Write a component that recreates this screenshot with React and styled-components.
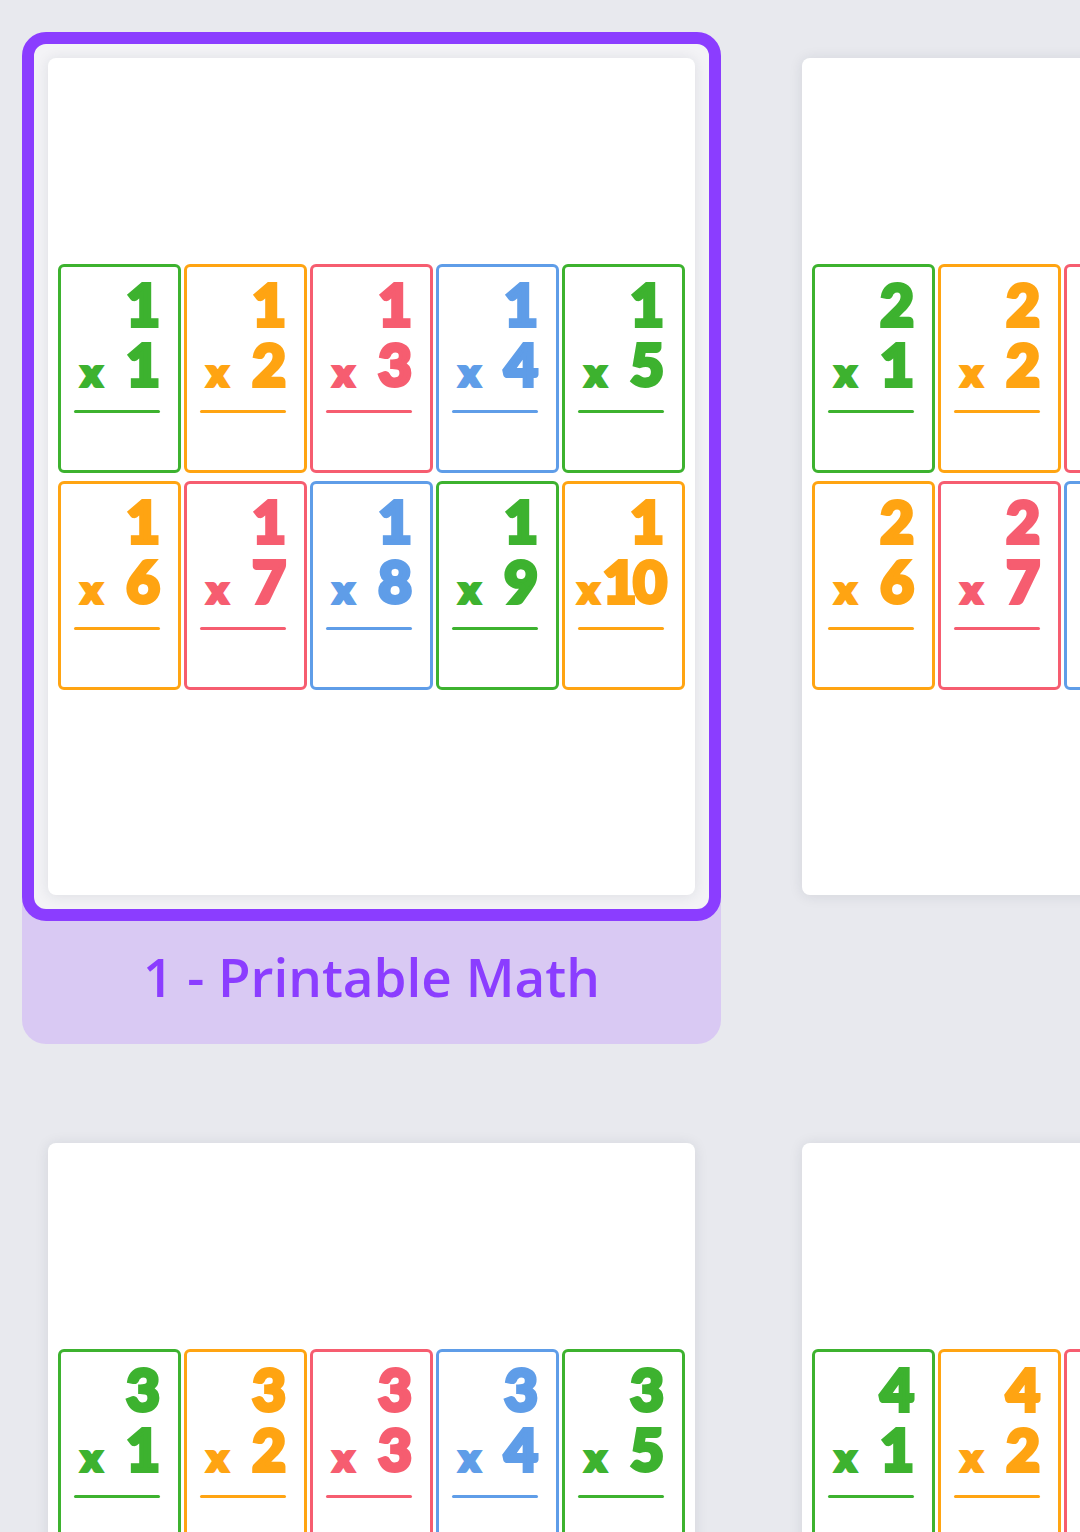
import React from "react";
import styled, { createGlobalStyle } from "styled-components";

const GlobalStyle = createGlobalStyle`
  * {
    box-sizing: border-box;
  }
  html,
  body {
    margin: 0;
    background: #e8e9ee;
    overflow: hidden;
  }
  body {
    font-family: "Open Sans", "Noto Sans", sans-serif;
  }
`;

const COLORS = ["#3db22f", "#ffa412", "#f65d70", "#5f9de8"];

const Board = styled.div`
  display: grid;
  grid-template-columns: repeat(2, 699px);
  column-gap: 55px;
  row-gap: 73px;
  padding: 32px 0 0 22px;
  width: max-content;
`;

const Item = styled.div`
  display: flex;
  flex-direction: column;
  border-radius: 24px;
  background: ${(p) => (p.$selected ? "#d9c9f3" : "transparent")};
`;

const Frame = styled.div`
  border: 12px solid ${(p) => (p.$selected ? "#8b3dff" : "transparent")};
  border-radius: 24px;
  padding: 14px;
  background: ${(p) => (p.$selected ? "#f3f3f6" : "transparent")};
`;

const Page = styled.div`
  width: 647px;
  height: 837px;
  padding: 0 10px;
  display: flex;
  align-items: center;
  background: #fff;
  border-radius: 8px;
  box-shadow: 0 1px 14px rgba(30, 35, 60, 0.1);
`;

const CardGrid = styled.div`
  width: 100%;
  display: grid;
  grid-template-columns: repeat(5, 1fr);
  gap: 8px 3px;
`;

const Card = styled.div`
  height: 209px;
  padding: 7px 0 0 13px;
  border: 3px solid ${(p) => p.$color};
  border-radius: 6px;
  color: ${(p) => p.$color};
  font-family: Lato, "Liberation Sans", sans-serif;
  font-weight: 900;
  -webkit-text-stroke: 4px ${(p) => p.$color};
`;

const Problem = styled.div`
  width: 86px;
  display: flex;
  flex-direction: column;
`;

const Top = styled.div`
  font-size: 58px;
  line-height: 60px;
  text-align: right;
`;

const Bottom = styled.div`
  display: flex;
  align-items: baseline;
  justify-content: space-between;
`;

const Times = styled.span`
  font-size: 36px;
  line-height: 44px;
  margin-left: ${(p) => (p.$wide ? "1px" : "8px")};
`;

const Num = styled.span`
  font-size: 58px;
  line-height: 60px;
  letter-spacing: ${(p) => (p.$wide ? "-3px" : "0")};
`;

const Rule = styled.div`
  height: 3px;
  margin-top: 16px;
  border-radius: 2px;
  background: currentColor;
`;

const Label = styled.div`
  height: 123px;
  padding-bottom: 12px;
  display: flex;
  align-items: center;
  justify-content: center;
  color: #8b3dff;
  font-size: 53px;
  font-weight: 600;
`;

const pages = [
  { id: 1, title: "Printable Math" },
  { id: 2 },
  { id: 3 },
  { id: 4 },
];

function FlashCard({ base, factor, color }) {
  const wide = factor >= 10;
  return (
    <Card $color={color}>
      <Problem>
        <Top>{base}</Top>
        <Bottom>
          <Times $wide={wide}>x</Times>
          <Num $wide={wide}>{factor}</Num>
        </Bottom>
        <Rule />
      </Problem>
    </Card>
  );
}

export default function App() {
  const selected = 1;
  return (
    <>
      <GlobalStyle />
      <Board>
        {pages.map(({ id, title }) => {
          const isSel = id === selected;
          return (
            <Item key={id} $selected={isSel}>
              <Frame $selected={isSel}>
                <Page>
                  <CardGrid>
                    {Array.from({ length: 10 }, (_, i) => (
                      <FlashCard
                        key={i}
                        base={id}
                        factor={i + 1}
                        color={COLORS[i % 4]}
                      />
                    ))}
                  </CardGrid>
                </Page>
              </Frame>
              <Label>{isSel ? `${id} - ${title}` : ""}</Label>
            </Item>
          );
        })}
      </Board>
    </>
  );
}
